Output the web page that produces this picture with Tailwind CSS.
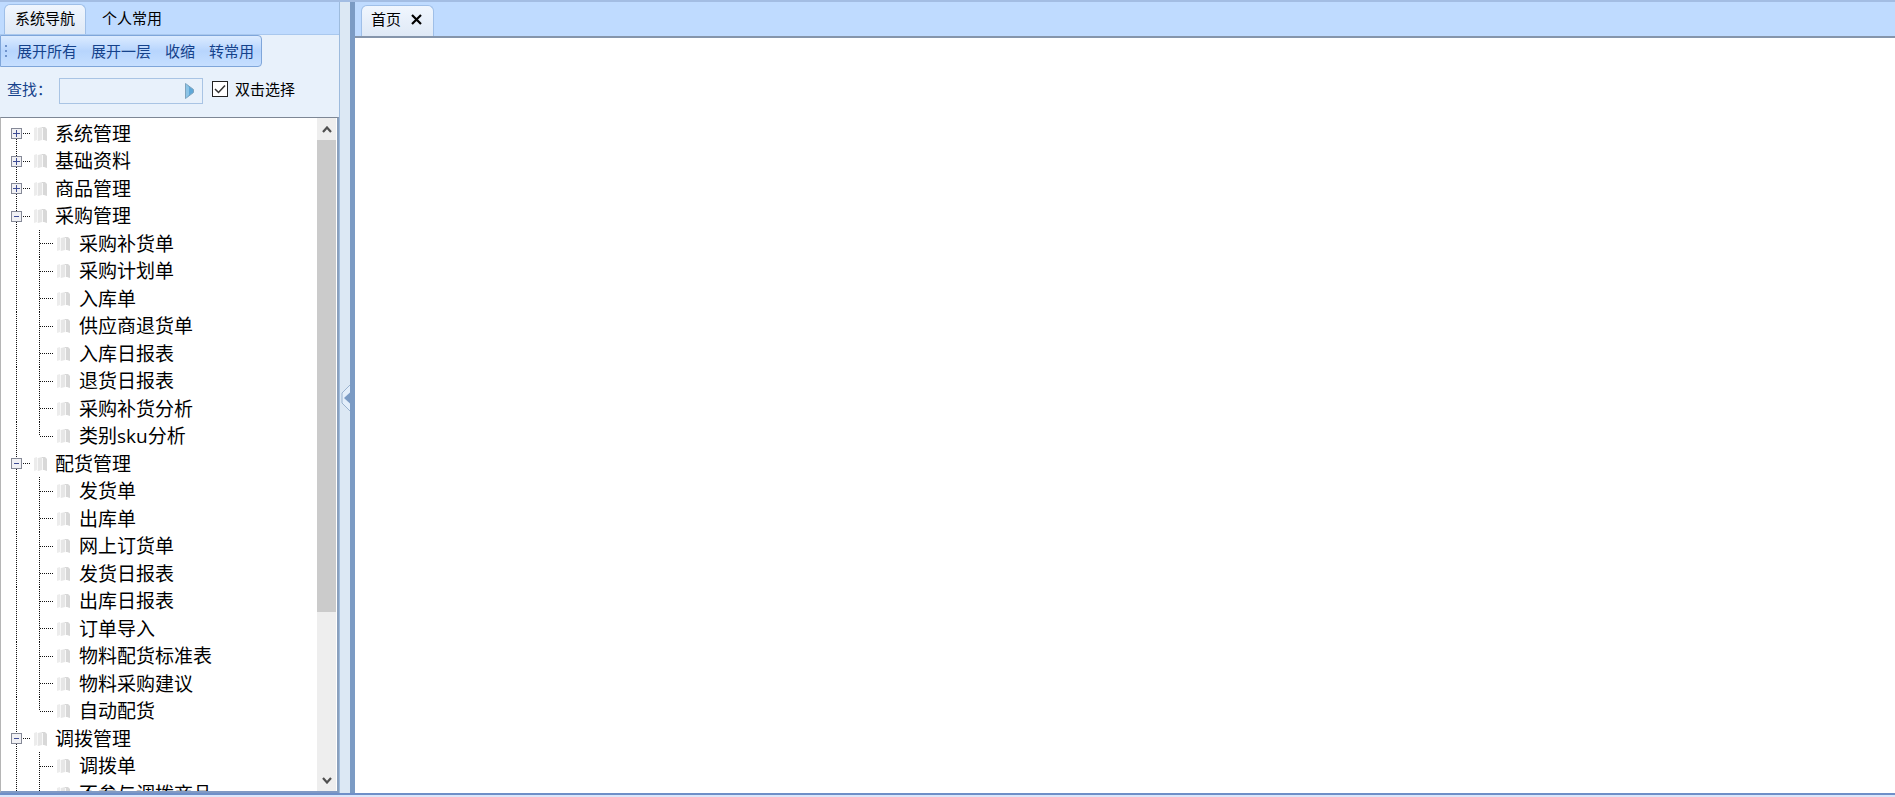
<!DOCTYPE html>
<html lang="zh-CN">
<head>
    <meta charset="UTF-8">
    <meta name="viewport" content="width=device-width, initial-scale=1.0">
    <title>系统导航</title>
    <script src="https://cdn.jsdelivr.net/npm/@tailwindcss/browser@4"></script>
</head>
<body class="flex h-screen flex-col overflow-hidden bg-white font-['Open_Sans','Noto_Sans_CJK_SC',sans-serif] text-[15px] leading-5 text-black">
    <div class="flex min-h-0 flex-1 border-t-2 border-[#a3bde3]">

        <!-- Navigation panel -->
        <aside class="flex w-[340px] shrink-0 flex-col border-r border-[#9dbbdd] bg-[#e8f1fb]">
            <div role="tablist" class="flex h-[33px] items-end border-b border-[#a9c8ee] bg-[#bfdbff] pl-1">
                <button role="tab" aria-selected="true" class="h-[30px] rounded-t-md border border-b-0 border-[#9fbfe8] bg-linear-to-b from-[#f0f6fe] to-[#dfe9f6] px-[10px] pb-1 text-center">系统导航</button>
                <button role="tab" aria-selected="false" class="h-[30px] px-4 pb-[2px]">个人常用</button>
            </div>

            <div class="flex h-8 items-center gap-[14px] self-start rounded-r-sm border border-[#7fa6da] bg-linear-to-b from-[#dcebff] via-[#b7d5fd] via-50% to-[#c6dfff] pr-[7px] pl-1 text-[#15428b]">
                <span class="-mr-1 flex flex-col gap-[3px]">
                    <i class="size-[2px] bg-[#6f93cc]"></i>
                    <i class="size-[2px] bg-[#6f93cc]"></i>
                    <i class="size-[2px] bg-[#6f93cc]"></i>
                </span>
                <button>展开所有</button>
                <button>展开一层</button>
                <button>收缩</button>
                <button>转常用</button>
            </div>

            <form class="flex h-[50px] items-center pb-[6px] pl-[7px]" onsubmit="return false">
                <label for="keyword" class="w-[52px] whitespace-nowrap text-[#15428b]">查找：</label>
                <div class="mt-1 flex h-[26px] w-36 items-center border border-[#a9c4e4] bg-[#e8f1fb] pr-2">
                    <input id="keyword" type="text" class="h-full min-w-0 flex-1 px-1 outline-none">
                    <button aria-label="查找">
                        <svg width="9" height="16" viewBox="0 0 9 16"><path d="M.5 .5v15L8.500 9.500v-3z" fill="#5fa8d8" stroke="#7fa3bd"/><path d="M1 1v14l3-3V4z" fill="#8cc4e6"/></svg>
                    </button>
                </div>
                <input id="dblclick" type="checkbox" checked class="ml-[9px] size-4 appearance-none border border-[#222] bg-white checked:bg-[url('data:image/svg+xml,%3Csvg%20xmlns=%22http://www.w3.org/2000/svg%22%20viewBox=%220%200%2014%2014%22%3E%3Cpath%20d=%22M2%207l3.500%203.500L12%203.500%22%20fill=%22none%22%20stroke=%22%23333%22%20stroke-width=%221.5%22/%3E%3C/svg%3E')]">
                <label for="dblclick" class="ml-[7px]">双击选择</label>
            </form>

            <div class="flex min-h-0 flex-1 border-t border-r-2 border-b-2 border-l border-t-[#7d8795] border-r-[#8aa0bd] border-b-[#8099c4] border-l-[#b5b5b5] bg-white">
                <div id="tree" role="tree" class="grid min-w-0 flex-1 auto-rows-[27px_28px] content-start overflow-hidden pt-[2px] pl-2 text-[19px]"></div>
                <!-- Scrollbar -->
                <div class="mr-px flex w-[19px] flex-col items-center bg-[#eeeeee]">
                    <button aria-label="向上" class="flex h-[22px] items-center">
                        <svg width="10" height="7" viewBox="0 0 10 7" fill="none" stroke="#505050" stroke-width="2.200"><path d="M1 6l4-4.500L9 6"/></svg>
                    </button>
                    <div class="flex w-full flex-1 flex-col">
                        <div class="w-full bg-[#cbcbcb]" style="height: 75%"></div>
                    </div>
                    <button aria-label="向下" class="flex h-[22px] items-center">
                        <svg width="10" height="7" viewBox="0 0 10 7" fill="none" stroke="#505050" stroke-width="2.200"><path d="M1 1l4 4.500L9 1"/></svg>
                    </button>
                </div>
            </div>
        </aside>

        <!-- Splitter -->
        <div class="flex w-[15px] shrink-0 items-center border-r-[5px] border-[#7b9bc4] bg-[#dce8f4]">
            <button aria-label="收起" class="w-full">
                <svg class="ml-px" width="9" height="28" viewBox="0 0 9 28"><path d="M9 1L1 9v10l8 8" fill="#e3eefa" stroke="#9ab2ce"/><path d="M9 8.500v11L3 14z" fill="#7b9bc4"/></svg>
            </button>
        </div>

        <!-- Content -->
        <main class="flex min-w-0 flex-1 flex-col">
            <div role="tablist" class="flex h-9 items-end border-b-2 border-[#8595ab] bg-[#bfdbff] pl-[6px]">
                <button role="tab" aria-selected="true" class="flex h-[31px] items-center gap-[10px] rounded-t-md border border-b-0 border-[#9fbfe8] bg-linear-to-b from-[#f0f6fe] to-[#dfe9f6] pr-[11px] pb-1 pl-[9px]">
                    首页
                    <svg width="11" height="11" viewBox="0 0 11 11" stroke="#000" stroke-width="2.200"><path d="M1 1l9 9M10 1l-9 9"/></svg>
                </button>
            </div>
            <div class="flex-1"></div>
        </main>
    </div>
    <footer class="h-1 border-t-2 border-[#6f8fc8] bg-[#dbe7fb]"></footer>

    <script>
        const menu = [
            { name: '系统管理' },
            { name: '基础资料' },
            { name: '商品管理' },
            { name: '采购管理', items: ['采购补货单', '采购计划单', '入库单', '供应商退货单', '入库日报表', '退货日报表', '采购补货分析', '类别sku分析'] },
            { name: '配货管理', items: ['发货单', '出库单', '网上订货单', '发货日报表', '出库日报表', '订单导入', '物料配货标准表', '物料采购建议', '自动配货'] },
            { name: '调拨管理', items: ['调拨单', '不参与调拨商品'] }
        ];

        const book = `<svg width="15" height="16" viewBox="0 0 15 16"><path d="M1 2l3-1v13l-3 1z" fill="#ececec"/><path d="M5 2l4-1v13l-4 1z" fill="#e6e6e6"/><path d="M9 1h3l2 2v12l-3-1H9z" fill="#d8d8d8"/><path d="M4.500 2v13M9.500 2v12" stroke="#f8f8f8"/></svg>`;

        // Dotted connectors, one pixel on and one off
        const vline = '<i class="w-px flex-1 bg-[repeating-linear-gradient(#111_0_1px,transparent_1px_2px)]"></i>';
        const blank = '<i class="w-px flex-1"></i>';

        const toggle = (open, first) => `
            <span class="flex w-[15px] flex-col items-center self-stretch">
                ${first ? blank : vline}
                <button aria-label="${open ? '收缩' : '展开'}">
                    <svg class="block" width="11" height="11" viewBox="0 0 11 11"><rect x=".5" y=".5" width="10" height="10" fill="#f1f1f4" stroke="#858997"/><path d="${open ? 'M3 5.500h5' : 'M2 5.500h7M5.500 2v7'}" stroke="#3f4d94"/></svg>
                </button>
                ${vline}
            </span>`;

        let html = '';
        menu.forEach((group, i) => {
            html += `
                <div role="treeitem" aria-level="1" class="flex min-h-0 items-center">
                    ${toggle(group.items, i === 0)}
                    <i class="mr-[3px] -ml-px h-px w-[7px] bg-[repeating-linear-gradient(90deg,#111_0_1px,transparent_1px_2px)]"></i>
                    <span class="w-[22px]">${book}</span>
                    <span class="whitespace-nowrap">${group.name}</span>
                </div>`;
            (group.items || []).forEach((item, j) => {
                // the last open group carries on below the visible part
                const last = j === group.items.length - 1 && i < menu.length - 1;
                html += `
                <div role="treeitem" aria-level="2" class="flex min-h-0 items-center">
                    <span class="flex w-[15px] flex-col items-center self-stretch">${vline}</span>
                    <span class="ml-[15px] flex flex-col self-stretch">
                        ${vline}
                        ${last ? blank : vline}
                    </span>
                    <i class="mr-[3px] h-px w-[13px] bg-[repeating-linear-gradient(90deg,#111_0_1px,transparent_1px_2px)]"></i>
                    <span class="w-[23px]">${book}</span>
                    <span class="whitespace-nowrap">${item}</span>
                </div>`;
            });
        });
        document.getElementById('tree').innerHTML = html;
    </script>
</body>
</html>
